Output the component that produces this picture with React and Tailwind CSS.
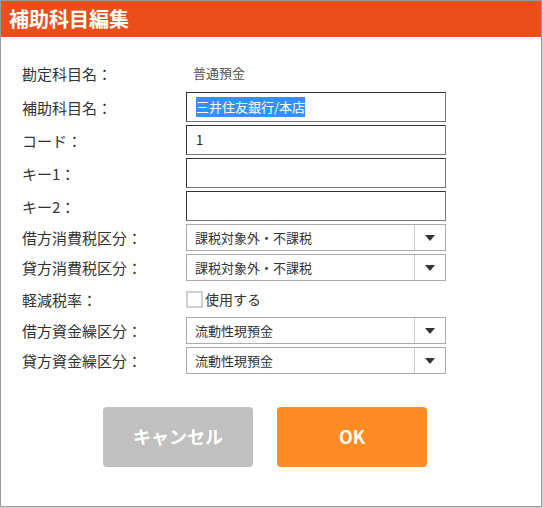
import React from "react";

const font = { fontFamily: '"Noto Sans CJK JP", "Noto Sans", sans-serif' };

function Label({ children }) {
  return <div className="w-[185px] shrink-0 pl-[21px] text-[15px] text-[#333] leading-none">{children}</div>;
}

function TextBox({ children }) {
  return (
    <div className="w-[260px] h-[30px] border border-t-[#333] border-l-[#333] border-r-[#777] border-b-[#777] flex items-center pl-[9px] text-[13px] text-[#222]">
      {children}
    </div>
  );
}

function Select({ value }) {
  return (
    <div className="w-[260px] h-[27px] border border-[#aaa] flex items-stretch">
      <div className="flex-1 flex items-center pl-[8px] text-[13px] text-[#333]">{value}</div>
      <div className="w-[31px] border-l border-[#ccc] flex items-center justify-center">
        <svg width="10" height="6" viewBox="0 0 10 6">
          <path d="M0 0 L10 0 L5 6 Z" fill="#333" />
        </svg>
      </div>
    </div>
  );
}

function Row({ h, children, className = "" }) {
  return <div className={`flex items-center ${className}`} style={{ height: h }}>{children}</div>;
}

export default function App() {
  return (
    <div className="w-[543px] h-[508px] bg-[#d6d6d6]" style={font}>
      <div className="w-[542px] h-[507px] bg-white border border-[#9a9a9a] flex flex-col">
        <div className="h-[36px] bg-[#e94e1b] flex items-center pl-[8px]">
          <span className="text-white font-bold text-[20px] leading-none">補助科目編集</span>
        </div>
        <div className="flex flex-col pt-[21px]">
          <Row h={30} className="mb-[4px]">
            <Label>勘定科目名：</Label>
            <div className="pl-[7px] text-[13px] text-[#555]">普通預金</div>
          </Row>
          <div className="flex flex-col gap-[3px]">
            <Row h={30}>
              <Label>補助科目名：</Label>
              <TextBox>
                <span className="bg-[#3390ff] text-white leading-[20px]">三井住友銀行/本店</span>
              </TextBox>
            </Row>
            <Row h={30}>
              <Label>コード：</Label>
              <TextBox>1</TextBox>
            </Row>
            <Row h={30}>
              <Label>キー1：</Label>
              <TextBox />
            </Row>
            <Row h={30}>
              <Label>キー2：</Label>
              <TextBox />
            </Row>
            <Row h={27}>
              <Label>借方消費税区分：</Label>
              <Select value="課税対象外・不課税" />
            </Row>
            <Row h={27}>
              <Label>貸方消費税区分：</Label>
              <Select value="課税対象外・不課税" />
            </Row>
            <Row h={30}>
              <Label>軽減税率：</Label>
              <div className="flex items-center">
                <div className="w-[17px] h-[17px] border-2 border-[#cfcfcf] bg-white" />
                <span className="ml-[2px] text-[14px] text-[#333]">使用する</span>
              </div>
            </Row>
            <Row h={27}>
              <Label>借方資金繰区分：</Label>
              <Select value="流動性現預金" />
            </Row>
            <Row h={27}>
              <Label>貸方資金繰区分：</Label>
              <Select value="流動性現預金" />
            </Row>
          </div>
          <div className="flex gap-[24px] pl-[102px] mt-[33px]">
            <button className="w-[150px] h-[60px] rounded-[4px] bg-[#c0c0c0] text-white font-bold text-[18px] leading-none pb-[3px]">キャンセル</button>
            <button className="w-[150px] h-[60px] rounded-[4px] bg-[#fe8c23] text-white font-bold text-[18px] leading-none pb-[3px]">OK</button>
          </div>
        </div>
      </div>
    </div>
  );
}
